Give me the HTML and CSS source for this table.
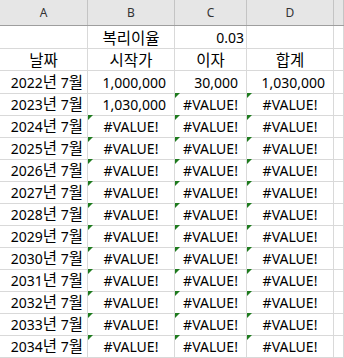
FILE: index.html
```html
<!DOCTYPE html>
<html lang="ko">
<head>
<meta charset="utf-8">
<title>복리 계산</title>
<link rel="stylesheet" href="styles.css">
</head>
<body>
<div class="sheet">
  <div class="row hdr">
    <div class="h">A</div><div class="h">B</div><div class="h">C</div><div class="h">D</div><div class="h"></div>
  </div>
  <div class="row first">
    <div class="cell"></div><div class="cell ctr ko">복리이율</div><div class="cell rt pad2">0.03</div><div class="cell"></div><div class="cell"></div>
  </div>
  <div class="row">
    <div class="cell ctr ko">날짜</div><div class="cell ctr ko">시작가</div><div class="cell ctr ko">이자</div><div class="cell ctr ko">합계</div><div class="cell"></div>
  </div>
  <div class="row">
    <div class="cell rt date"><span>2022<span class="ko">년</span> 7<span class="ko">월</span></span></div><div class="cell rt num">1,000,000</div><div class="cell rt num">30,000</div><div class="cell rt num">1,030,000</div><div class="cell"></div>
  </div>
  <div class="row">
    <div class="cell rt date"><span>2023<span class="ko">년</span> 7<span class="ko">월</span></span></div><div class="cell rt num">1,030,000</div><div class="cell err">#VALUE!</div><div class="cell err">#VALUE!</div><div class="cell"></div>
  </div>
  <div class="row">
    <div class="cell rt date"><span>2024<span class="ko">년</span> 7<span class="ko">월</span></span></div><div class="cell err">#VALUE!</div><div class="cell err">#VALUE!</div><div class="cell err">#VALUE!</div><div class="cell"></div>
  </div>
  <div class="row">
    <div class="cell rt date"><span>2025<span class="ko">년</span> 7<span class="ko">월</span></span></div><div class="cell err">#VALUE!</div><div class="cell err">#VALUE!</div><div class="cell err">#VALUE!</div><div class="cell"></div>
  </div>
  <div class="row">
    <div class="cell rt date"><span>2026<span class="ko">년</span> 7<span class="ko">월</span></span></div><div class="cell err">#VALUE!</div><div class="cell err">#VALUE!</div><div class="cell err">#VALUE!</div><div class="cell"></div>
  </div>
  <div class="row">
    <div class="cell rt date"><span>2027<span class="ko">년</span> 7<span class="ko">월</span></span></div><div class="cell err">#VALUE!</div><div class="cell err">#VALUE!</div><div class="cell err">#VALUE!</div><div class="cell"></div>
  </div>
  <div class="row">
    <div class="cell rt date"><span>2028<span class="ko">년</span> 7<span class="ko">월</span></span></div><div class="cell err">#VALUE!</div><div class="cell err">#VALUE!</div><div class="cell err">#VALUE!</div><div class="cell"></div>
  </div>
  <div class="row">
    <div class="cell rt date"><span>2029<span class="ko">년</span> 7<span class="ko">월</span></span></div><div class="cell err">#VALUE!</div><div class="cell err">#VALUE!</div><div class="cell err">#VALUE!</div><div class="cell"></div>
  </div>
  <div class="row">
    <div class="cell rt date"><span>2030<span class="ko">년</span> 7<span class="ko">월</span></span></div><div class="cell err">#VALUE!</div><div class="cell err">#VALUE!</div><div class="cell err">#VALUE!</div><div class="cell"></div>
  </div>
  <div class="row">
    <div class="cell rt date"><span>2031<span class="ko">년</span> 7<span class="ko">월</span></span></div><div class="cell err">#VALUE!</div><div class="cell err">#VALUE!</div><div class="cell err">#VALUE!</div><div class="cell"></div>
  </div>
  <div class="row">
    <div class="cell rt date"><span>2032<span class="ko">년</span> 7<span class="ko">월</span></span></div><div class="cell err">#VALUE!</div><div class="cell err">#VALUE!</div><div class="cell err">#VALUE!</div><div class="cell"></div>
  </div>
  <div class="row">
    <div class="cell rt date"><span>2033<span class="ko">년</span> 7<span class="ko">월</span></span></div><div class="cell err">#VALUE!</div><div class="cell err">#VALUE!</div><div class="cell err">#VALUE!</div><div class="cell"></div>
  </div>
  <div class="row">
    <div class="cell rt date"><span>2034<span class="ko">년</span> 7<span class="ko">월</span></span></div><div class="cell err">#VALUE!</div><div class="cell err">#VALUE!</div><div class="cell err">#VALUE!</div><div class="cell"></div>
  </div>
  <div class="row">
    <div class="cell"></div><div class="cell"></div><div class="cell"></div><div class="cell"></div><div class="cell"></div>
  </div>
</div>
</body>
</html>
```
FILE: styles.css
```css
* { box-sizing: border-box; }
html, body { margin: 0; padding: 0; background: #fff; }
body { overflow: hidden; }

.sheet {
  width: 344px;
  height: 358px;
  overflow: hidden;
  font-family: "Noto Sans", "Noto Sans CJK KR", sans-serif;
  font-size: 14px;
  color: #000;
}

.row {
  display: grid;
  grid-template-columns: 88px 87px 72px 87px 1fr;
  height: 22px;
}
.row.first { height: 23px; }

.hdr {
  height: 26px;
  background: #e6e6e6;
  border-bottom: 1px solid #9e9e9e;
}
.h {
  border-right: 1px solid #c4c4c4;
  display: flex;
  align-items: center;
  justify-content: center;
  font-size: 12px;
  color: #333;
  padding-bottom: 1px;
}

.cell {
  position: relative;
  border-right: 1px solid #d9d9d9;
  border-bottom: 1px solid #d9d9d9;
  display: flex;
  align-items: center;
  white-space: nowrap;
  line-height: 21px;
}
.ko {
  font-family: "Noto Sans CJK KR", sans-serif;
  font-size: 15.5px;
}
.ctr { justify-content: center; }
.rt { justify-content: flex-end; }
.pad2 { padding-right: 2px; }
.date { padding-right: 4px; }
.num { padding-right: 8px; }

.err { justify-content: center; }
.err::before {
  content: "";
  position: absolute;
  left: 0;
  top: 0;
  border-top: 5px solid #1e7b1e;
  border-right: 5px solid transparent;
}
```
